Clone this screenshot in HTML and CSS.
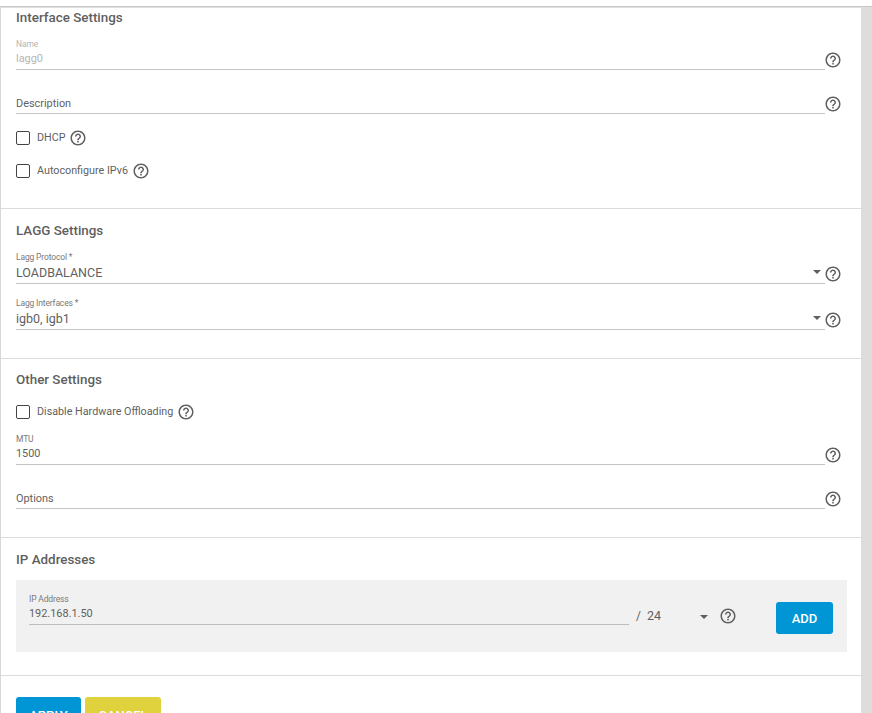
FILE: index.html
```html
<!DOCTYPE html>
<html lang="en">
<head>
<meta charset="utf-8">
<title>Interface Settings</title>
<link rel="stylesheet" href="styles.css">
</head>
<body>
<svg class="defs" width="0" height="0" aria-hidden="true"><defs>
<symbol id="help" viewBox="0 0 24 24"><path fill="currentColor" d="M11 18h2v-2h-2v2zm1-16C6.48 2 2 6.48 2 12s4.48 10 10 10 10-4.48 10-10S17.52 2 12 2zm0 18c-4.41 0-8-3.59-8-8s3.59-8 8-8 8 3.59 8 8-3.59 8-8 8zm0-14c-2.21 0-4 1.79-4 4h2c0-1.1.9-2 2-2s2 .9 2 2c0 2-3 1.75-3 5h2c0-2.25 3-2.5 3-5 0-2.21-1.79-4-4-4z"/></symbol>
</defs></svg>
<div class="topline"></div>
<div class="shell">
  <main class="card">
    <section class="section s1">
      <h2 class="title">Interface Settings</h2>
      <div class="field f-name">
        <div class="control disabled"><label class="label">Name</label><div class="value">lagg0</div></div>
        <svg class="help"><use href="#help"/></svg>
      </div>
      <div class="field f-plain">
        <div class="control"><div class="value plain">Description</div></div>
        <svg class="help"><use href="#help"/></svg>
      </div>
      <div class="check c-dhcp"><span class="box"></span><span class="check-text">DHCP</span><svg class="help"><use href="#help"/></svg></div>
      <div class="check c-auto"><span class="box"></span><span class="check-text">Autoconfigure IPv6</span><svg class="help"><use href="#help"/></svg></div>
    </section>
    <section class="section s2">
      <h2 class="title">LAGG Settings</h2>
      <div class="field f-lagg1">
        <div class="control"><label class="label">Lagg Protocol *</label><div class="value select">LOADBALANCE</div><span class="caret"></span></div>
        <svg class="help"><use href="#help"/></svg>
      </div>
      <div class="field f-lagg2">
        <div class="control"><label class="label">Lagg Interfaces *</label><div class="value select">igb0, igb1</div><span class="caret"></span></div>
        <svg class="help"><use href="#help"/></svg>
      </div>
    </section>
    <section class="section s3">
      <h2 class="title">Other Settings</h2>
      <div class="check c-hw"><span class="box"></span><span class="check-text">Disable Hardware Offloading</span><svg class="help"><use href="#help"/></svg></div>
      <div class="field f-mtu">
        <div class="control"><label class="label">MTU</label><div class="value">1500</div></div>
        <svg class="help"><use href="#help"/></svg>
      </div>
      <div class="field f-plain">
        <div class="control"><div class="value plain">Options</div></div>
        <svg class="help"><use href="#help"/></svg>
      </div>
    </section>
    <section class="section s4">
      <h2 class="title">IP Addresses</h2>
      <div class="ip-panel">
        <div class="control ip-control"><label class="label">IP Address</label><div class="value">192.168.1.50</div></div>
        <span class="slash">/</span>
        <span class="mask">24</span>
        <span class="caret-inline"></span>
        <svg class="help"><use href="#help"/></svg>
        <button class="btn btn-add" type="button">ADD</button>
      </div>
    </section>
    <div class="actions">
      <button class="btn btn-apply" type="button">APPLY</button>
      <button class="btn btn-cancel" type="button">CANCEL</button>
    </div>
  </main>
  <div class="gutter"></div>
</div>
</body>
</html>
```
FILE: styles.css
```css
* { box-sizing: border-box; }
html, body { margin: 0; height: 713px; overflow: hidden; background: #fff; }
body { font-family: Roboto, "Liberation Sans", sans-serif; color: #5f5f5f; }
.defs { position: absolute; }
.topline { height: 7px; border-bottom: 1px solid #c8c8c8; box-shadow: 0 1px 0 #e0e0e0; }
.shell { display: flex; height: 706px; }
.card { width: 861px; border-left: 1px solid #d8d8d8; flex: none; }
.gutter { flex: 1; background: #ddd; }
.section { padding: 0 14px 0 15px; border-bottom: 1px solid #dcdcdc; }
.s1 { height: 202px; }
.s2 { height: 150px; }
.s3 { height: 179px; }
.s4 { height: 138px; }
.title { margin: 0; font-size: 13.4px; line-height: 16px; font-weight: 500; color: #5f5f5f; }
.s1 .title { padding-top: 3px; height: 19px; }
.s2 .title { padding-top: 14px; height: 30px; }
.s3 .title { padding-top: 13px; height: 29px; }
.s4 .title { padding-top: 14px; height: 30px; }
.field { display: flex; align-items: flex-end; }
.control { position: relative; flex: 1; height: 100%; border-bottom: 1px solid #c4c4c4; display: flex; flex-direction: column; justify-content: flex-end; }
.label { font-size: 8.5px; letter-spacing: -0.15px; line-height: 10px; margin-bottom: 3px; color: #7a7a7a; }
.value { font-size: 10.9px; line-height: 14px; padding-bottom: 3px; color: #5f5f5f; }
.value.plain { padding-bottom: 2px; }
.value.select { font-size: 12.5px; margin-top: 1px; }
.disabled .label, .disabled .value { color: #b5b5b5; }
.help { width: 18px; height: 18px; flex: none; color: #5f5f5f; display: block; }
.field > .help { margin: 0 5px 1px -1px; }
.f-name { height: 44px; }
.f-plain { height: 44px; }
.f-lagg1 { height: 45px; }
.f-lagg2 { height: 46px; }
.f-mtu { height: 45px; }
.check { display: flex; align-items: center; height: 16px; }
.box { width: 14px; height: 14px; border: 1.5px solid #444; border-radius: 2px; margin-right: 7px; background: #fff; flex: none; }
.check-text { font-size: 10.75px; line-height: 14px; margin-right: 4px; }
.c-dhcp .check-text { margin-right: 3px; }
.c-dhcp { margin-top: 16px; }
.c-auto { margin-top: 17px; }
.c-hw { margin-top: 16px; }
.caret { position: absolute; right: 4px; bottom: 9px; width: 0; height: 0; border-left: 4px solid transparent; border-right: 4px solid transparent; border-top: 4px solid #5f5f5f; }
.ip-panel { display: flex; align-items: flex-end; height: 72px; margin-top: 12px; padding: 0 14px 18px 13px; background: #f1f1f1; }
.ip-control { flex: none; width: 600px; height: 32px; border-bottom-color: #bdbdbd; margin-bottom: 9px; }
.slash { width: 11px; margin-left: 7px; font-size: 12px; line-height: 14px; padding-bottom: 11px; }
.mask { width: 53px; font-size: 12.5px; line-height: 14px; padding-bottom: 11px; }
.caret-inline { width: 0; height: 0; margin-right: 11px; margin-bottom: 15px; border-left: 4px solid transparent; border-right: 4px solid transparent; border-top: 4px solid #5f5f5f; }
.ip-panel .help { margin-bottom: 9px; margin-right: 39px; }
.btn { border: 0; border-radius: 3px; color: #fff; font-family: inherit; font-weight: 500; font-size: 13px; padding: 0; }
.btn-add { width: 57px; height: 32px; background: #0095d5; }
.actions { display: flex; gap: 4px; padding: 21px 15px 0; }
.btn-apply { width: 65px; height: 36px; background: #0095d5; }
.btn-cancel { width: 76px; height: 36px; background: #e0d23c; }
```
